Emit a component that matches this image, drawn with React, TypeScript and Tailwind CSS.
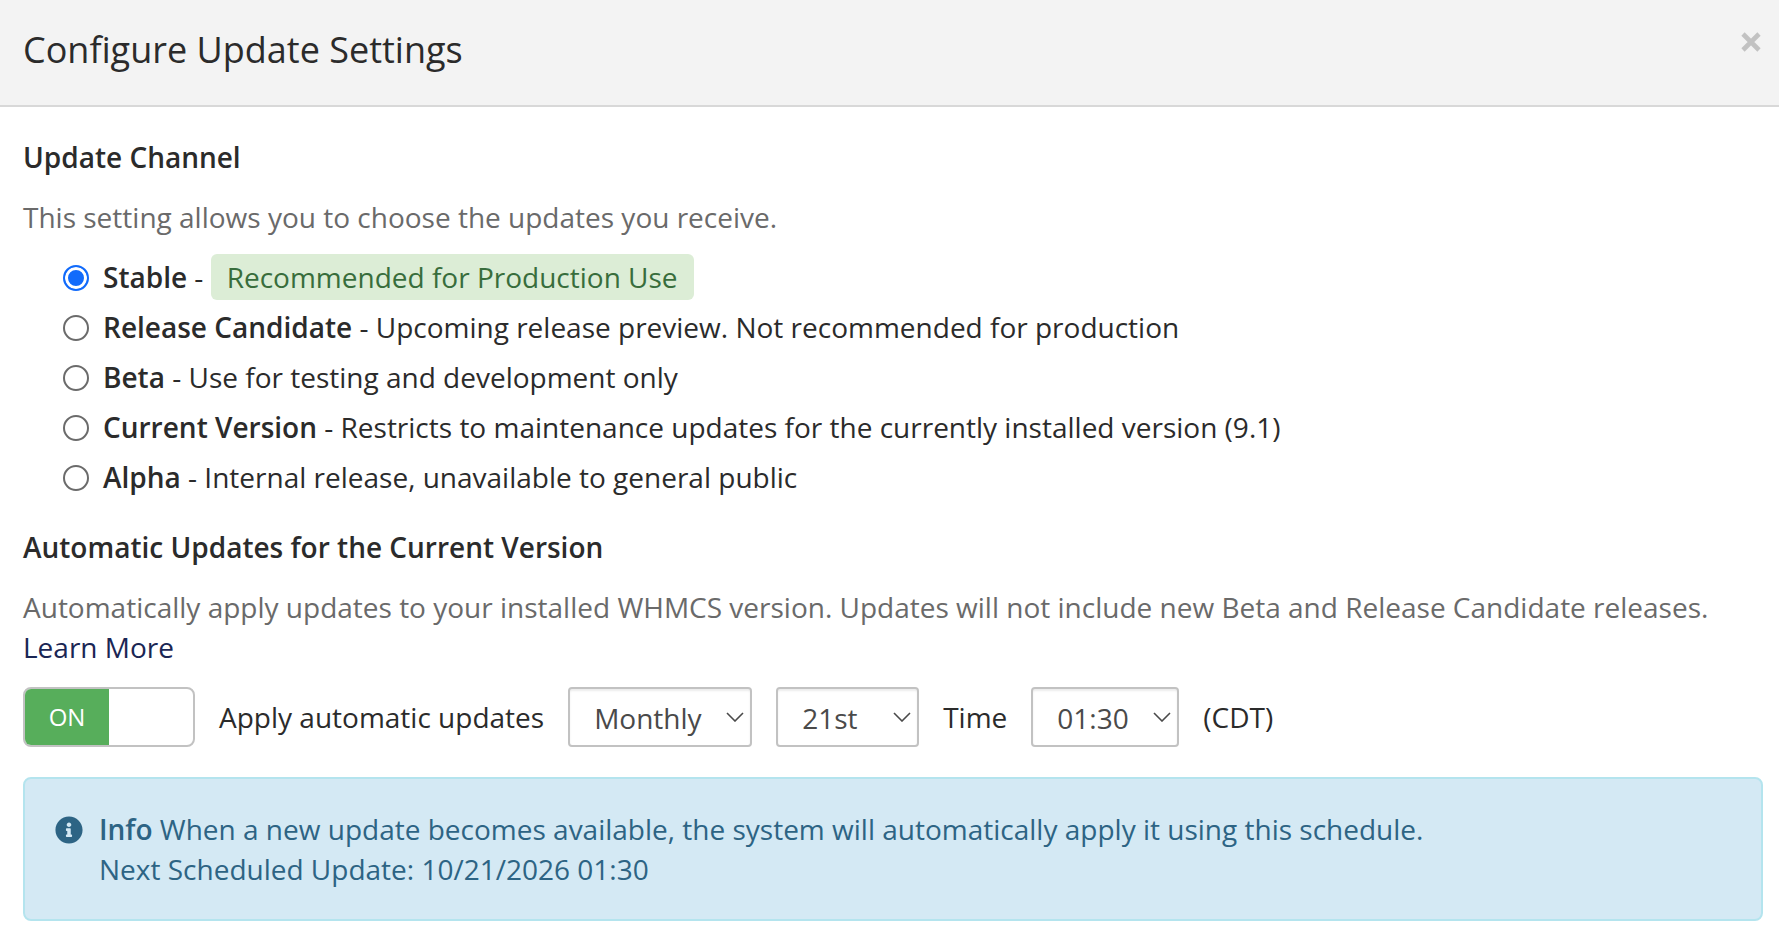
import { useState } from 'react';
import { FaInfoCircle } from 'react-icons/fa';

const channels = [
  { id: 'stable', name: 'Stable', description: 'Recommended for Production Use', recommended: true },
  { id: 'rc', name: 'Release Candidate', description: 'Upcoming release preview. Not recommended for production' },
  { id: 'beta', name: 'Beta', description: 'Use for testing and development only' },
  {
    id: 'current',
    name: 'Current Version',
    description: 'Restricts to maintenance updates for the currently installed version (9.1)',
  },
  { id: 'alpha', name: 'Alpha', description: 'Internal release, unavailable to general public' },
];

interface SelectProps {
  label: string;
  value: string;
  options: string[];
  className: string;
  onChange: (value: string) => void;
}

function Select({ label, value, options, className, onChange }: SelectProps) {
  return (
    <div className={`relative ${className}`}>
      <select
        aria-label={label}
        value={value}
        onChange={e => onChange(e.target.value)}
        className="h-[60px] w-full appearance-none rounded-sm border-2 border-[#c2c2c2] bg-white pt-0.5 pl-6 text-[28px] leading-10 text-[#4a4a4a] shadow-[inset_0_2px_2px_rgba(0,0,0,0.075)]"
      >
        {options.map(option => (
          <option key={option}>{option}</option>
        ))}
      </select>
      <svg
        viewBox="0 0 18 10"
        className="pointer-events-none absolute top-[25px] right-2 h-[10px] w-[18px] fill-none stroke-[#4a4a4a] stroke-[1.6]"
      >
        <path d="M1 1l8 8 8-8" />
      </svg>
    </div>
  );
}

export default function App() {
  const [channel, setChannel] = useState('stable');
  const [enabled, setEnabled] = useState(true);
  const [frequency, setFrequency] = useState('Monthly');
  const [day, setDay] = useState('21st');
  const [time, setTime] = useState('01:30');

  return (
    <main className="min-h-screen bg-white font-['Open_Sans','Noto_Sans',sans-serif] text-[28px] leading-10 text-[#2b2b2b]">
      <header className="flex items-start justify-between border-b-2 border-[#d8d8d8] bg-[#f3f3f3] pt-6 pr-[18px] pb-[29px] pl-[23px]">
        <h1 className="text-[36px] leading-[52px]">Configure Update Settings</h1>
        <button type="button" aria-label="Close" className="mt-2">
          <svg viewBox="0 0 20 20" className="h-5 w-5 stroke-[#c2c2c2] stroke-[4.6]">
            <path d="M2 2l16 16M18 2L2 18" />
          </svg>
        </button>
      </header>

      <div className="pt-[30px] pr-4 pb-3 pl-[23px]">
        <h2 id="channel-title" className="font-semibold">
          Update Channel
        </h2>
        <p className="mt-5 text-[#6a6a6a]">This setting allows you to choose the updates you receive.</p>

        <div role="radiogroup" aria-labelledby="channel-title" className="mt-5 ml-10 flex flex-col items-start gap-[10px]">
          {channels.map(({ id, name, description, recommended }) => (
            <label key={id} className="flex h-10 items-center">
              <input
                type="radio"
                name="channel"
                value={id}
                checked={channel === id}
                onChange={() => setChannel(id)}
                className="mt-0.5 mr-[14px] h-[26px] w-[26px] appearance-none rounded-full border-2 border-[#6b6b6b] bg-white checked:border-[#126bfb] checked:bg-[#126bfb] checked:shadow-[inset_0_0_0_3px_white]"
              />
              <span>
                <strong className="font-semibold">{name}</strong> -{' '}
                {recommended ? (
                  <span className="inline-block h-[46px] rounded-md bg-[#dcedd6] px-4 leading-[46px] text-[#386d3c]">
                    {description}
                  </span>
                ) : (
                  description
                )}
              </span>
            </label>
          ))}
        </div>

        <h2 className="mt-[30px] font-semibold">Automatic Updates for the Current Version</h2>
        <p className="mt-5 text-[#6a6a6a]">
          Automatically apply updates to your installed WHMCS version. Updates will not include new Beta and Release
          Candidate releases.{' '}
          <a href="#learn-more" className="text-[#1a2654]">
            Learn More
          </a>
        </p>

        <div className="mt-5 flex flex-wrap items-center gap-6">
          <button
            type="button"
            role="switch"
            aria-checked={enabled}
            aria-labelledby="apply-label"
            onClick={() => setEnabled(!enabled)}
            className="flex h-[60px] w-[172px] overflow-hidden rounded-lg border-2 border-[#c2c2c2] bg-white text-2xl"
          >
            {enabled ? (
              <span className="flex h-full w-1/2 items-center justify-center bg-[#57ae5b] text-white">ON</span>
            ) : (
              <span className="ml-auto flex h-full w-1/2 items-center justify-center bg-[#eeeeee]">OFF</span>
            )}
          </button>
          <span id="apply-label">Apply automatic updates</span>
          <Select
            label="Frequency"
            value={frequency}
            options={['Daily', 'Weekly', 'Monthly']}
            className="w-[184px]"
            onChange={setFrequency}
          />
          <Select
            label="Day"
            value={day}
            options={['1st', '7th', '14th', '21st', '28th']}
            className="w-[143px]"
            onChange={setDay}
          />
          <span>Time</span>
          <Select
            label="Time"
            value={time}
            options={['00:30', '01:00', '01:30', '02:00']}
            className="w-[148px]"
            onChange={setTime}
          />
          <span>(CDT)</span>
        </div>

        <div className="mt-[30px] flex items-start gap-4 rounded-lg border-2 border-[#b4e4ee] bg-[#d4e9f4] p-[30px] text-[#2d6484]">
          <FaInfoCircle className="mt-[7px] h-7 w-7 shrink-0" />
          <p>
            <strong className="font-semibold">Info</strong> When a new update becomes available, the system will
            automatically apply it using this schedule.
            <br />
            Next Scheduled Update: 10/21/2026 01:30
          </p>
        </div>
      </div>
    </main>
  );
}
